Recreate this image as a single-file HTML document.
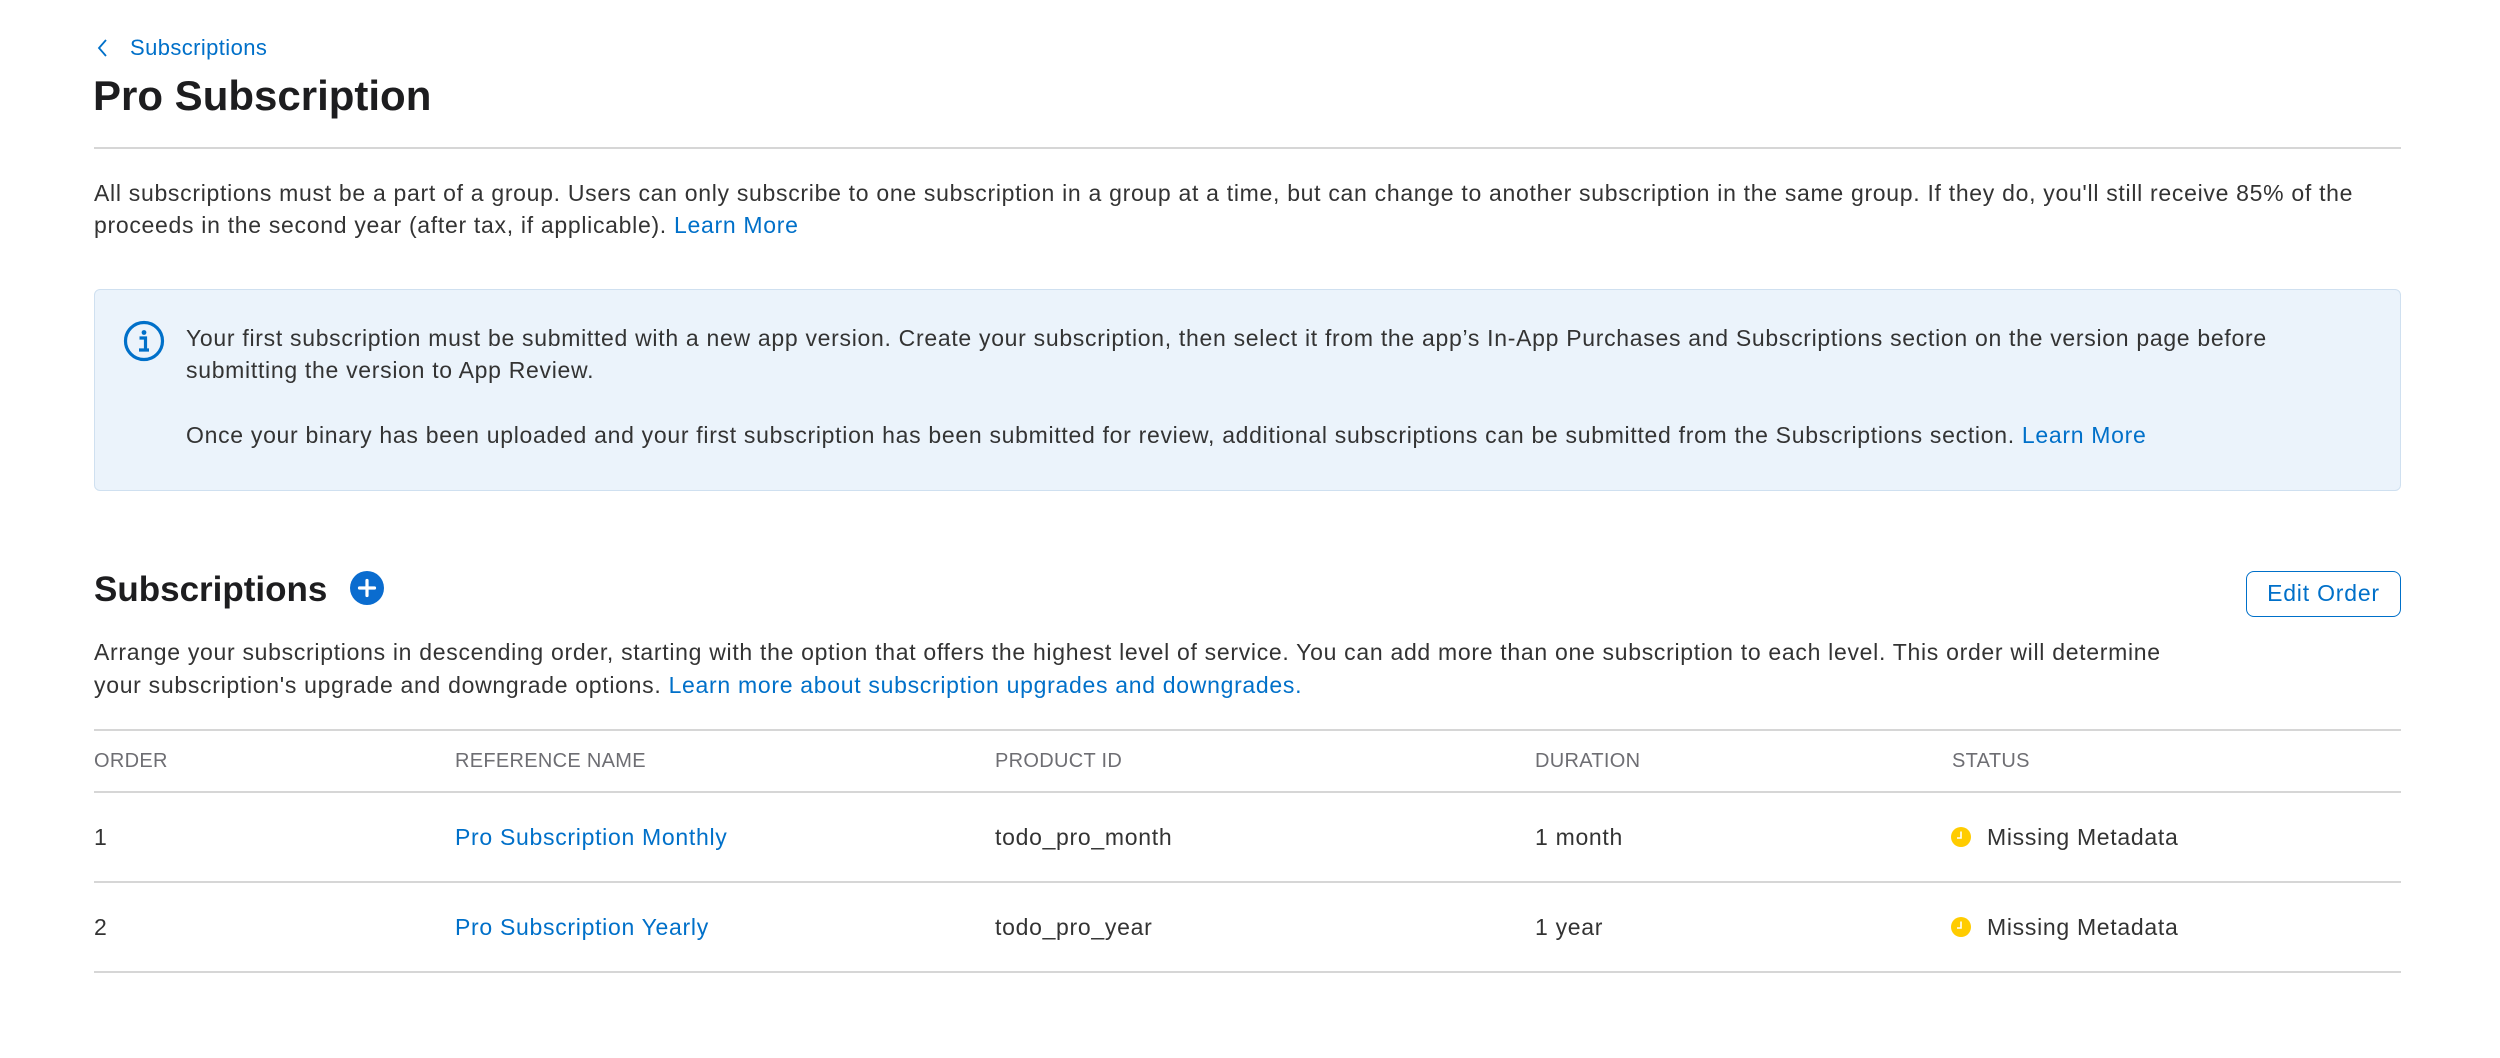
<!DOCTYPE html>
<html><head><meta charset="utf-8"><style>
*{margin:0;padding:0;box-sizing:border-box}
body{width:2500px;height:1058px;background:#fff;font-family:"Liberation Sans",sans-serif;color:#1d1d1f;position:relative;overflow:hidden}
.a{position:absolute;white-space:nowrap}
.t{font-size:23px;line-height:32px;letter-spacing:0.7px;color:#333}
.l,.t.l{color:#0070c9}
.hr{position:absolute;left:94px;width:2307px;height:1.5px;background:#d6d6d6}
.h{font-size:20px;color:#6e6e73;line-height:24px;letter-spacing:0.3px}
.dot{position:absolute;width:20px;height:20px;border-radius:50%;background:#ffcc00}
</style></head><body>
<svg class="a" style="left:96px;top:38px" width="14" height="20" viewBox="0 0 14 20"><path d="M10 2 L3 10 L10 18" fill="none" stroke="#0070c9" stroke-width="1.8"/></svg>
<div class="a l" style="left:130px;top:34px;font-size:22px;line-height:28px;letter-spacing:0.4px">Subscriptions</div>
<div class="a" style="left:93px;top:71px;font-size:42px;font-weight:bold;line-height:50px">Pro Subscription</div>
<div class="hr" style="top:147px"></div>
<div class="a t" style="left:94px;top:177px">All subscriptions must be a part of a group. Users can only subscribe to one subscription in a group at a time, but can change to another subscription in the same group. If they do, you'll still receive 85% of the</div>
<div class="a t" style="left:94px;top:209px">proceeds in the second year (after tax, if applicable). <span class="l">Learn More</span></div>
<div class="a" style="left:94px;top:289px;width:2307px;height:202px;background:#ebf3fb;border:1.5px solid #cfe0f0;border-radius:6px"></div>
<svg class="a" style="left:123px;top:320px" width="42" height="42" viewBox="0 0 42 42"><circle cx="21" cy="21" r="18.5" fill="none" stroke="#0070c9" stroke-width="3.2"/><circle cx="21" cy="12.5" r="2.4" fill="#0070c9"/><path d="M16.5 18 H22.5 V29 M16 30 H26" fill="none" stroke="#0070c9" stroke-width="3.2"/></svg>
<div class="a t" style="left:186px;top:322px">Your first subscription must be submitted with a new app version. Create your subscription, then select it from the app’s In-App Purchases and Subscriptions section on the version page before</div>
<div class="a t" style="left:186px;top:354px">submitting the version to App Review.</div>
<div class="a t" style="left:186px;top:419px">Once your binary has been uploaded and your first subscription has been submitted for review, additional subscriptions can be submitted from the Subscriptions section. <span class="l">Learn More</span></div>
<div class="a" style="left:94px;top:568px;font-size:35px;font-weight:bold;line-height:44px">Subscriptions</div>
<svg class="a" style="left:350px;top:571px" width="34" height="34" viewBox="0 0 34 34"><circle cx="17" cy="17" r="17" fill="#0a6ccf"/><path d="M17 9.5V24.5M9.5 17H24.5" stroke="#fff" stroke-width="3.2" stroke-linecap="round"/></svg>
<div class="a" style="left:2246px;top:571px;width:155px;height:46px;border:1.5px solid #0070c9;border-radius:8px;color:#0070c9;font-size:23px;letter-spacing:0.8px;line-height:43px;text-align:center">Edit Order</div>
<div class="a t" style="left:94px;top:636px">Arrange your subscriptions in descending order, starting with the option that offers the highest level of service. You can add more than one subscription to each level. This order will determine</div>
<div class="a t" style="left:94px;top:669px">your subscription's upgrade and downgrade options. <span class="l">Learn more about subscription upgrades and downgrades.</span></div>
<div class="hr" style="top:729px"></div>
<div class="a h" style="left:94px;top:749px">ORDER</div>
<div class="a h" style="left:455px;top:749px">REFERENCE NAME</div>
<div class="a h" style="left:995px;top:749px">PRODUCT ID</div>
<div class="a h" style="left:1535px;top:749px">DURATION</div>
<div class="a h" style="left:1952px;top:749px">STATUS</div>
<div class="hr" style="top:791px"></div>
<div class="a t" style="left:94px;top:821px">1</div>
<div class="a t l" style="left:455px;top:821px">Pro Subscription Monthly</div>
<div class="a t" style="left:995px;top:821px">todo_pro_month</div>
<div class="a t" style="left:1535px;top:821px">1 month</div>
<div class="dot" style="left:1951px;top:827px"></div><svg class="a" style="left:1951px;top:827px" width="20" height="20"><path d="M10 4.5V11H6" fill="none" stroke="#fff" stroke-width="1.6"/></svg>
<div class="a t" style="left:1987px;top:821px">Missing Metadata</div>
<div class="hr" style="top:881px"></div>
<div class="a t" style="left:94px;top:911px">2</div>
<div class="a t l" style="left:455px;top:911px">Pro Subscription Yearly</div>
<div class="a t" style="left:995px;top:911px">todo_pro_year</div>
<div class="a t" style="left:1535px;top:911px">1 year</div>
<div class="dot" style="left:1951px;top:917px"></div><svg class="a" style="left:1951px;top:917px" width="20" height="20"><path d="M10 4.5V11H6" fill="none" stroke="#fff" stroke-width="1.6"/></svg>
<div class="a t" style="left:1987px;top:911px">Missing Metadata</div>
<div class="hr" style="top:971px"></div>
</body></html>
